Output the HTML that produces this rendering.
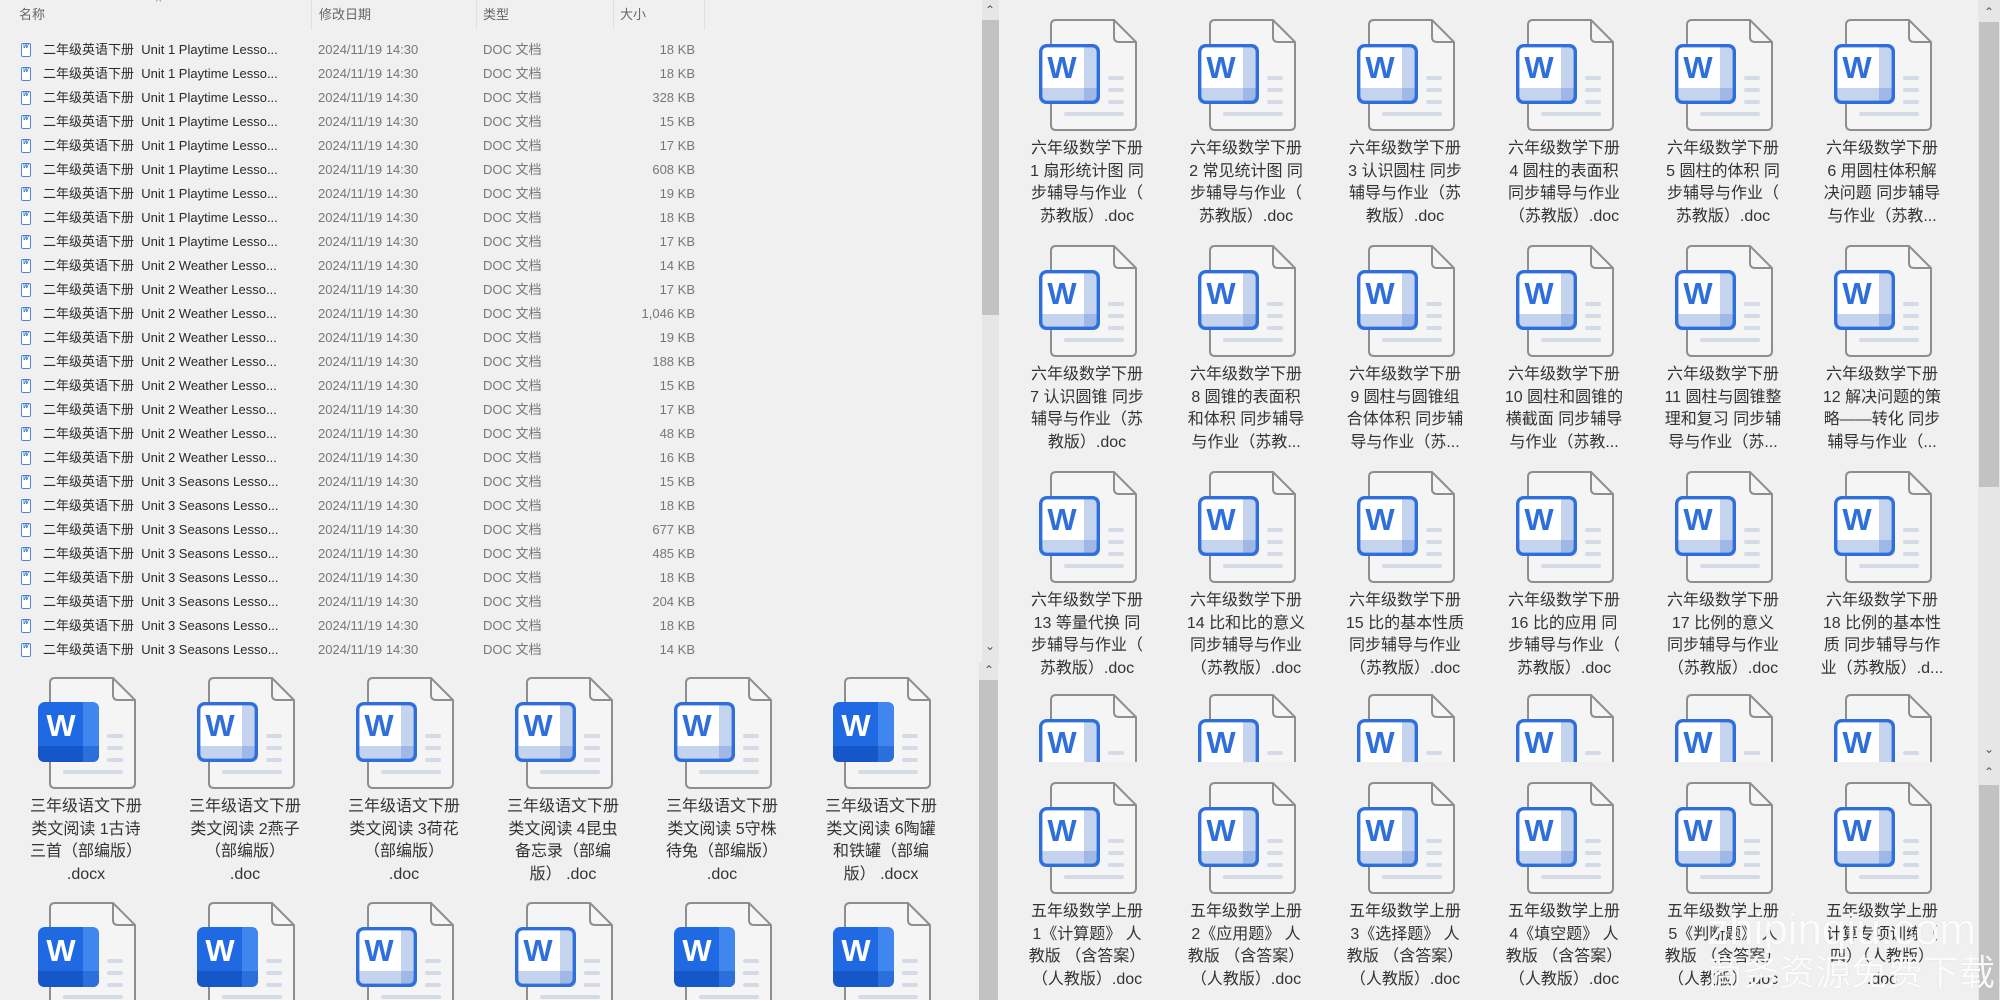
<!DOCTYPE html>
<html><head><meta charset="utf-8">
<style>
*{margin:0;padding:0;box-sizing:border-box}
html{width:2000px;height:1000px;overflow:hidden}
body{width:2000px;height:1000px;background:#f0f0f0;position:relative;overflow:hidden;font-family:"Liberation Sans","Noto Sans CJK SC",sans-serif;color:#333}
.abs{position:absolute}
.hdr{position:absolute;top:6px;font-size:13px;color:#666;line-height:18px}
.sep{position:absolute;top:0;width:1px;height:30px;background:#e0e0e0}
.row{position:absolute;left:0;width:720px;height:24px;line-height:24px;font-size:13px}
.row .ic{position:absolute;left:21px;top:5px;width:10px;height:14px;border:1.3px solid #5585d8;border-radius:2px;background:#fff}
.row .ic:after{content:"W";position:absolute;left:1px;top:-9px;font-size:6px;color:#2e6fdb;font-weight:bold}
.row .nm{position:absolute;left:43px;color:#2a2a2a;white-space:nowrap;font-size:13px}
.row .dt{position:absolute;left:318px;color:#777;font-size:13px}
.row .tp{position:absolute;left:483px;color:#777}
.row .sz{position:absolute;left:560px;width:135px;text-align:right;color:#777}
.it{position:absolute;width:160px;height:225px}
.it svg{position:absolute;left:30px;top:0;width:100px;height:112px}
.it .lb{position:absolute;left:-10px;top:119px;width:180px;text-align:center;font-size:16px;line-height:22.5px;color:#333;white-space:nowrap}
.sb{position:absolute;background:#e6e6e6}
.th{position:absolute;background:#c2c2c2}
.ar{position:absolute;font-size:12px;color:#555;text-align:center;width:18px;line-height:12px}
</style></head><body>
<svg width="0" height="0" style="position:absolute">
<defs>
<symbol id="pg" viewBox="0 0 100 112">
<path d="M19 1H77L99 23V106Q99 111 94 111H19Q14 111 14 106V6Q14 1 19 1Z" fill="#f5f5f5" stroke="#8e8e8e" stroke-width="2"/>
<path d="M77 1V18Q77 23 82 23H99" fill="none" stroke="#8e8e8e" stroke-width="2"/>
<rect x="71" y="57" width="16" height="4" rx="2" fill="#d4dbe7"/>
<rect x="71" y="69" width="16" height="4" rx="2" fill="#d4dbe7"/>
<rect x="71" y="81" width="16" height="4" rx="2" fill="#d4dbe7"/>
<rect x="27" y="93" width="60" height="4" rx="2" fill="#d4dbe7"/>
</symbol>
<symbol id="o" viewBox="0 0 100 112">
<use href="#pg"/>
<rect x="2" y="25" width="61" height="60" rx="7" fill="#fff"/>
<path d="M47 25H56Q63 25 63 32V78Q63 85 56 85H47Z" fill="#c5d4ee"/>
<path d="M2 69H63V78Q63 85 56 85H9Q2 85 2 78Z" fill="#c5d4ee"/>
<path d="M47 69H63V78Q63 85 56 85H47Z" fill="#9fb8e6"/>
<rect x="3.7" y="26.7" width="57.6" height="56.6" rx="6" fill="none" stroke="#2e6fdb" stroke-width="3.4"/>
</symbol>
<symbol id="f" viewBox="0 0 100 112">
<use href="#pg"/>
<rect x="2" y="25" width="61" height="60" rx="7" fill="#1f6ae2"/>
<path d="M47 25H56Q63 25 63 32V78Q63 85 56 85H47Z" fill="#3f87ee"/>
<path d="M2 69H63V78Q63 85 56 85H9Q2 85 2 78Z" fill="#1556c9"/>
<path d="M47 69H63V78Q63 85 56 85H47Z" fill="#2a6fdc"/>
</symbol>
</defs></svg>

<!-- LEFT LIST -->
<div class="abs" style="left:0;top:0;width:980px;height:662px;overflow:hidden">
<div class="hdr" style="left:19px">名称</div>
<div class="abs" style="left:156px;top:-4px;font-size:11px;color:#888">^</div>
<div class="hdr" style="left:319px">修改日期</div>
<div class="hdr" style="left:483px">类型</div>
<div class="hdr" style="left:620px">大小</div>
<div class="sep" style="left:311px"></div><div class="sep" style="left:476px"></div><div class="sep" style="left:613px"></div><div class="sep" style="left:704px"></div>

<div class="row" style="top:38px"><i class="ic"></i><span class="nm">二年级英语下册&nbsp; Unit 1 Playtime Lesso...</span><span class="dt">2024/11/19 14:30</span><span class="tp">DOC 文档</span><span class="sz">18 KB</span></div>
<div class="row" style="top:62px"><i class="ic"></i><span class="nm">二年级英语下册&nbsp; Unit 1 Playtime Lesso...</span><span class="dt">2024/11/19 14:30</span><span class="tp">DOC 文档</span><span class="sz">18 KB</span></div>
<div class="row" style="top:86px"><i class="ic"></i><span class="nm">二年级英语下册&nbsp; Unit 1 Playtime Lesso...</span><span class="dt">2024/11/19 14:30</span><span class="tp">DOC 文档</span><span class="sz">328 KB</span></div>
<div class="row" style="top:110px"><i class="ic"></i><span class="nm">二年级英语下册&nbsp; Unit 1 Playtime Lesso...</span><span class="dt">2024/11/19 14:30</span><span class="tp">DOC 文档</span><span class="sz">15 KB</span></div>
<div class="row" style="top:134px"><i class="ic"></i><span class="nm">二年级英语下册&nbsp; Unit 1 Playtime Lesso...</span><span class="dt">2024/11/19 14:30</span><span class="tp">DOC 文档</span><span class="sz">17 KB</span></div>
<div class="row" style="top:158px"><i class="ic"></i><span class="nm">二年级英语下册&nbsp; Unit 1 Playtime Lesso...</span><span class="dt">2024/11/19 14:30</span><span class="tp">DOC 文档</span><span class="sz">608 KB</span></div>
<div class="row" style="top:182px"><i class="ic"></i><span class="nm">二年级英语下册&nbsp; Unit 1 Playtime Lesso...</span><span class="dt">2024/11/19 14:30</span><span class="tp">DOC 文档</span><span class="sz">19 KB</span></div>
<div class="row" style="top:206px"><i class="ic"></i><span class="nm">二年级英语下册&nbsp; Unit 1 Playtime Lesso...</span><span class="dt">2024/11/19 14:30</span><span class="tp">DOC 文档</span><span class="sz">18 KB</span></div>
<div class="row" style="top:230px"><i class="ic"></i><span class="nm">二年级英语下册&nbsp; Unit 1 Playtime Lesso...</span><span class="dt">2024/11/19 14:30</span><span class="tp">DOC 文档</span><span class="sz">17 KB</span></div>
<div class="row" style="top:254px"><i class="ic"></i><span class="nm">二年级英语下册&nbsp; Unit 2 Weather Lesso...</span><span class="dt">2024/11/19 14:30</span><span class="tp">DOC 文档</span><span class="sz">14 KB</span></div>
<div class="row" style="top:278px"><i class="ic"></i><span class="nm">二年级英语下册&nbsp; Unit 2 Weather Lesso...</span><span class="dt">2024/11/19 14:30</span><span class="tp">DOC 文档</span><span class="sz">17 KB</span></div>
<div class="row" style="top:302px"><i class="ic"></i><span class="nm">二年级英语下册&nbsp; Unit 2 Weather Lesso...</span><span class="dt">2024/11/19 14:30</span><span class="tp">DOC 文档</span><span class="sz">1,046 KB</span></div>
<div class="row" style="top:326px"><i class="ic"></i><span class="nm">二年级英语下册&nbsp; Unit 2 Weather Lesso...</span><span class="dt">2024/11/19 14:30</span><span class="tp">DOC 文档</span><span class="sz">19 KB</span></div>
<div class="row" style="top:350px"><i class="ic"></i><span class="nm">二年级英语下册&nbsp; Unit 2 Weather Lesso...</span><span class="dt">2024/11/19 14:30</span><span class="tp">DOC 文档</span><span class="sz">188 KB</span></div>
<div class="row" style="top:374px"><i class="ic"></i><span class="nm">二年级英语下册&nbsp; Unit 2 Weather Lesso...</span><span class="dt">2024/11/19 14:30</span><span class="tp">DOC 文档</span><span class="sz">15 KB</span></div>
<div class="row" style="top:398px"><i class="ic"></i><span class="nm">二年级英语下册&nbsp; Unit 2 Weather Lesso...</span><span class="dt">2024/11/19 14:30</span><span class="tp">DOC 文档</span><span class="sz">17 KB</span></div>
<div class="row" style="top:422px"><i class="ic"></i><span class="nm">二年级英语下册&nbsp; Unit 2 Weather Lesso...</span><span class="dt">2024/11/19 14:30</span><span class="tp">DOC 文档</span><span class="sz">48 KB</span></div>
<div class="row" style="top:446px"><i class="ic"></i><span class="nm">二年级英语下册&nbsp; Unit 2 Weather Lesso...</span><span class="dt">2024/11/19 14:30</span><span class="tp">DOC 文档</span><span class="sz">16 KB</span></div>
<div class="row" style="top:470px"><i class="ic"></i><span class="nm">二年级英语下册&nbsp; Unit 3 Seasons Lesso...</span><span class="dt">2024/11/19 14:30</span><span class="tp">DOC 文档</span><span class="sz">15 KB</span></div>
<div class="row" style="top:494px"><i class="ic"></i><span class="nm">二年级英语下册&nbsp; Unit 3 Seasons Lesso...</span><span class="dt">2024/11/19 14:30</span><span class="tp">DOC 文档</span><span class="sz">18 KB</span></div>
<div class="row" style="top:518px"><i class="ic"></i><span class="nm">二年级英语下册&nbsp; Unit 3 Seasons Lesso...</span><span class="dt">2024/11/19 14:30</span><span class="tp">DOC 文档</span><span class="sz">677 KB</span></div>
<div class="row" style="top:542px"><i class="ic"></i><span class="nm">二年级英语下册&nbsp; Unit 3 Seasons Lesso...</span><span class="dt">2024/11/19 14:30</span><span class="tp">DOC 文档</span><span class="sz">485 KB</span></div>
<div class="row" style="top:566px"><i class="ic"></i><span class="nm">二年级英语下册&nbsp; Unit 3 Seasons Lesso...</span><span class="dt">2024/11/19 14:30</span><span class="tp">DOC 文档</span><span class="sz">18 KB</span></div>
<div class="row" style="top:590px"><i class="ic"></i><span class="nm">二年级英语下册&nbsp; Unit 3 Seasons Lesso...</span><span class="dt">2024/11/19 14:30</span><span class="tp">DOC 文档</span><span class="sz">204 KB</span></div>
<div class="row" style="top:614px"><i class="ic"></i><span class="nm">二年级英语下册&nbsp; Unit 3 Seasons Lesso...</span><span class="dt">2024/11/19 14:30</span><span class="tp">DOC 文档</span><span class="sz">18 KB</span></div>
<div class="row" style="top:638px"><i class="ic"></i><span class="nm">二年级英语下册&nbsp; Unit 3 Seasons Lesso...</span><span class="dt">2024/11/19 14:30</span><span class="tp">DOC 文档</span><span class="sz">14 KB</span></div>
</div>

<!-- LEFT GRID -->
<div class="abs" style="left:0;top:662px;width:980px;height:338px;overflow:hidden">
<div class="it" style="left:6px;top:15px"><svg viewBox="0 0 100 112"><use href="#f"/><text x="25" y="59" font-size="31" font-weight="bold" fill="#fff" text-anchor="middle" font-family="Liberation Sans">W</text></svg><div class="lb">三年级语文下册<br>类文阅读 1古诗<br>三首（部编版）<br>.docx</div></div>
<div class="it" style="left:165px;top:15px"><svg viewBox="0 0 100 112"><use href="#o"/><text x="25" y="59" font-size="31" font-weight="bold" fill="#2e6fdb" text-anchor="middle" font-family="Liberation Sans">W</text></svg><div class="lb">三年级语文下册<br>类文阅读 2燕子<br>（部编版）<br>.doc</div></div>
<div class="it" style="left:324px;top:15px"><svg viewBox="0 0 100 112"><use href="#o"/><text x="25" y="59" font-size="31" font-weight="bold" fill="#2e6fdb" text-anchor="middle" font-family="Liberation Sans">W</text></svg><div class="lb">三年级语文下册<br>类文阅读 3荷花<br>（部编版）<br>.doc</div></div>
<div class="it" style="left:483px;top:15px"><svg viewBox="0 0 100 112"><use href="#o"/><text x="25" y="59" font-size="31" font-weight="bold" fill="#2e6fdb" text-anchor="middle" font-family="Liberation Sans">W</text></svg><div class="lb">三年级语文下册<br>类文阅读 4昆虫<br>备忘录（部编<br>版） .doc</div></div>
<div class="it" style="left:642px;top:15px"><svg viewBox="0 0 100 112"><use href="#o"/><text x="25" y="59" font-size="31" font-weight="bold" fill="#2e6fdb" text-anchor="middle" font-family="Liberation Sans">W</text></svg><div class="lb">三年级语文下册<br>类文阅读 5守株<br>待兔（部编版）<br>.doc</div></div>
<div class="it" style="left:801px;top:15px"><svg viewBox="0 0 100 112"><use href="#f"/><text x="25" y="59" font-size="31" font-weight="bold" fill="#fff" text-anchor="middle" font-family="Liberation Sans">W</text></svg><div class="lb">三年级语文下册<br>类文阅读 6陶罐<br>和铁罐（部编<br>版） .docx</div></div>

<div class="it" style="left:6px;top:240px"><svg viewBox="0 0 100 112"><use href="#f"/><text x="25" y="59" font-size="31" font-weight="bold" fill="#fff" text-anchor="middle" font-family="Liberation Sans">W</text></svg></div>
<div class="it" style="left:165px;top:240px"><svg viewBox="0 0 100 112"><use href="#f"/><text x="25" y="59" font-size="31" font-weight="bold" fill="#fff" text-anchor="middle" font-family="Liberation Sans">W</text></svg></div>
<div class="it" style="left:324px;top:240px"><svg viewBox="0 0 100 112"><use href="#o"/><text x="25" y="59" font-size="31" font-weight="bold" fill="#2e6fdb" text-anchor="middle" font-family="Liberation Sans">W</text></svg></div>
<div class="it" style="left:483px;top:240px"><svg viewBox="0 0 100 112"><use href="#o"/><text x="25" y="59" font-size="31" font-weight="bold" fill="#2e6fdb" text-anchor="middle" font-family="Liberation Sans">W</text></svg></div>
<div class="it" style="left:642px;top:240px"><svg viewBox="0 0 100 112"><use href="#f"/><text x="25" y="59" font-size="31" font-weight="bold" fill="#fff" text-anchor="middle" font-family="Liberation Sans">W</text></svg></div>
<div class="it" style="left:801px;top:240px"><svg viewBox="0 0 100 112"><use href="#f"/><text x="25" y="59" font-size="31" font-weight="bold" fill="#fff" text-anchor="middle" font-family="Liberation Sans">W</text></svg></div>
</div>

<!-- LEFT SCROLLBARS -->
<div class="sb" style="left:982px;top:0;width:17px;height:662px"></div>
<div class="ar" style="left:981px;top:4px">&#8963;</div>
<div class="th" style="left:982px;top:20px;width:17px;height:295px"></div>
<div class="ar" style="left:981px;top:640px">&#8964;</div>
<div class="sb" style="left:979px;top:662px;width:19px;height:338px"></div>
<div class="ar" style="left:980px;top:664px">&#8963;</div>
<div class="th" style="left:979px;top:680px;width:19px;height:320px"></div>

<!-- RIGHT TOP -->
<div class="abs" style="left:0;top:0;width:1978px;height:762px;overflow:hidden">
<div class="it" style="left:1007px;top:19px"><svg viewBox="0 0 100 112"><use href="#o"/><text x="25" y="59" font-size="31" font-weight="bold" fill="#2e6fdb" text-anchor="middle" font-family="Liberation Sans">W</text></svg><div class="lb">六年级数学下册<br>1 扇形统计图 同<br>步辅导与作业（<br>苏教版）.doc</div></div>
<div class="it" style="left:1166px;top:19px"><svg viewBox="0 0 100 112"><use href="#o"/><text x="25" y="59" font-size="31" font-weight="bold" fill="#2e6fdb" text-anchor="middle" font-family="Liberation Sans">W</text></svg><div class="lb">六年级数学下册<br>2 常见统计图 同<br>步辅导与作业（<br>苏教版）.doc</div></div>
<div class="it" style="left:1325px;top:19px"><svg viewBox="0 0 100 112"><use href="#o"/><text x="25" y="59" font-size="31" font-weight="bold" fill="#2e6fdb" text-anchor="middle" font-family="Liberation Sans">W</text></svg><div class="lb">六年级数学下册<br>3 认识圆柱 同步<br>辅导与作业（苏<br>教版）.doc</div></div>
<div class="it" style="left:1484px;top:19px"><svg viewBox="0 0 100 112"><use href="#o"/><text x="25" y="59" font-size="31" font-weight="bold" fill="#2e6fdb" text-anchor="middle" font-family="Liberation Sans">W</text></svg><div class="lb">六年级数学下册<br>4 圆柱的表面积<br>同步辅导与作业<br>（苏教版）.doc</div></div>
<div class="it" style="left:1643px;top:19px"><svg viewBox="0 0 100 112"><use href="#o"/><text x="25" y="59" font-size="31" font-weight="bold" fill="#2e6fdb" text-anchor="middle" font-family="Liberation Sans">W</text></svg><div class="lb">六年级数学下册<br>5 圆柱的体积 同<br>步辅导与作业（<br>苏教版）.doc</div></div>
<div class="it" style="left:1802px;top:19px"><svg viewBox="0 0 100 112"><use href="#o"/><text x="25" y="59" font-size="31" font-weight="bold" fill="#2e6fdb" text-anchor="middle" font-family="Liberation Sans">W</text></svg><div class="lb">六年级数学下册<br>6 用圆柱体积解<br>决问题 同步辅导<br>与作业（苏教...</div></div>

<div class="it" style="left:1007px;top:245px"><svg viewBox="0 0 100 112"><use href="#o"/><text x="25" y="59" font-size="31" font-weight="bold" fill="#2e6fdb" text-anchor="middle" font-family="Liberation Sans">W</text></svg><div class="lb">六年级数学下册<br>7 认识圆锥 同步<br>辅导与作业（苏<br>教版）.doc</div></div>
<div class="it" style="left:1166px;top:245px"><svg viewBox="0 0 100 112"><use href="#o"/><text x="25" y="59" font-size="31" font-weight="bold" fill="#2e6fdb" text-anchor="middle" font-family="Liberation Sans">W</text></svg><div class="lb">六年级数学下册<br>8 圆锥的表面积<br>和体积 同步辅导<br>与作业（苏教...</div></div>
<div class="it" style="left:1325px;top:245px"><svg viewBox="0 0 100 112"><use href="#o"/><text x="25" y="59" font-size="31" font-weight="bold" fill="#2e6fdb" text-anchor="middle" font-family="Liberation Sans">W</text></svg><div class="lb">六年级数学下册<br>9 圆柱与圆锥组<br>合体体积 同步辅<br>导与作业（苏...</div></div>
<div class="it" style="left:1484px;top:245px"><svg viewBox="0 0 100 112"><use href="#o"/><text x="25" y="59" font-size="31" font-weight="bold" fill="#2e6fdb" text-anchor="middle" font-family="Liberation Sans">W</text></svg><div class="lb">六年级数学下册<br>10 圆柱和圆锥的<br>横截面 同步辅导<br>与作业（苏教...</div></div>
<div class="it" style="left:1643px;top:245px"><svg viewBox="0 0 100 112"><use href="#o"/><text x="25" y="59" font-size="31" font-weight="bold" fill="#2e6fdb" text-anchor="middle" font-family="Liberation Sans">W</text></svg><div class="lb">六年级数学下册<br>11 圆柱与圆锥整<br>理和复习 同步辅<br>导与作业（苏...</div></div>
<div class="it" style="left:1802px;top:245px"><svg viewBox="0 0 100 112"><use href="#o"/><text x="25" y="59" font-size="31" font-weight="bold" fill="#2e6fdb" text-anchor="middle" font-family="Liberation Sans">W</text></svg><div class="lb">六年级数学下册<br>12 解决问题的策<br>略——转化 同步<br>辅导与作业（...</div></div>

<div class="it" style="left:1007px;top:471px"><svg viewBox="0 0 100 112"><use href="#o"/><text x="25" y="59" font-size="31" font-weight="bold" fill="#2e6fdb" text-anchor="middle" font-family="Liberation Sans">W</text></svg><div class="lb">六年级数学下册<br>13 等量代换 同<br>步辅导与作业（<br>苏教版）.doc</div></div>
<div class="it" style="left:1166px;top:471px"><svg viewBox="0 0 100 112"><use href="#o"/><text x="25" y="59" font-size="31" font-weight="bold" fill="#2e6fdb" text-anchor="middle" font-family="Liberation Sans">W</text></svg><div class="lb">六年级数学下册<br>14 比和比的意义<br>同步辅导与作业<br>（苏教版）.doc</div></div>
<div class="it" style="left:1325px;top:471px"><svg viewBox="0 0 100 112"><use href="#o"/><text x="25" y="59" font-size="31" font-weight="bold" fill="#2e6fdb" text-anchor="middle" font-family="Liberation Sans">W</text></svg><div class="lb">六年级数学下册<br>15 比的基本性质<br>同步辅导与作业<br>（苏教版）.doc</div></div>
<div class="it" style="left:1484px;top:471px"><svg viewBox="0 0 100 112"><use href="#o"/><text x="25" y="59" font-size="31" font-weight="bold" fill="#2e6fdb" text-anchor="middle" font-family="Liberation Sans">W</text></svg><div class="lb">六年级数学下册<br>16 比的应用 同<br>步辅导与作业（<br>苏教版）.doc</div></div>
<div class="it" style="left:1643px;top:471px"><svg viewBox="0 0 100 112"><use href="#o"/><text x="25" y="59" font-size="31" font-weight="bold" fill="#2e6fdb" text-anchor="middle" font-family="Liberation Sans">W</text></svg><div class="lb">六年级数学下册<br>17 比例的意义<br>同步辅导与作业<br>（苏教版）.doc</div></div>
<div class="it" style="left:1802px;top:471px"><svg viewBox="0 0 100 112"><use href="#o"/><text x="25" y="59" font-size="31" font-weight="bold" fill="#2e6fdb" text-anchor="middle" font-family="Liberation Sans">W</text></svg><div class="lb">六年级数学下册<br>18 比例的基本性<br>质 同步辅导与作<br>业（苏教版）.d...</div></div>

<div class="it" style="left:1007px;top:694px"><svg viewBox="0 0 100 112"><use href="#o"/><text x="25" y="59" font-size="31" font-weight="bold" fill="#2e6fdb" text-anchor="middle" font-family="Liberation Sans">W</text></svg></div>
<div class="it" style="left:1166px;top:694px"><svg viewBox="0 0 100 112"><use href="#o"/><text x="25" y="59" font-size="31" font-weight="bold" fill="#2e6fdb" text-anchor="middle" font-family="Liberation Sans">W</text></svg></div>
<div class="it" style="left:1325px;top:694px"><svg viewBox="0 0 100 112"><use href="#o"/><text x="25" y="59" font-size="31" font-weight="bold" fill="#2e6fdb" text-anchor="middle" font-family="Liberation Sans">W</text></svg></div>
<div class="it" style="left:1484px;top:694px"><svg viewBox="0 0 100 112"><use href="#o"/><text x="25" y="59" font-size="31" font-weight="bold" fill="#2e6fdb" text-anchor="middle" font-family="Liberation Sans">W</text></svg></div>
<div class="it" style="left:1643px;top:694px"><svg viewBox="0 0 100 112"><use href="#o"/><text x="25" y="59" font-size="31" font-weight="bold" fill="#2e6fdb" text-anchor="middle" font-family="Liberation Sans">W</text></svg></div>
<div class="it" style="left:1802px;top:694px"><svg viewBox="0 0 100 112"><use href="#o"/><text x="25" y="59" font-size="31" font-weight="bold" fill="#2e6fdb" text-anchor="middle" font-family="Liberation Sans">W</text></svg></div>
</div>

<!-- RIGHT BOTTOM -->
<div class="abs" style="left:0;top:762px;width:1978px;height:238px;overflow:hidden">
<div class="it" style="left:1007px;top:20px"><svg viewBox="0 0 100 112"><use href="#o"/><text x="25" y="59" font-size="31" font-weight="bold" fill="#2e6fdb" text-anchor="middle" font-family="Liberation Sans">W</text></svg><div class="lb">五年级数学上册<br>1《计算题》 人<br>教版 （含答案）<br>（人教版）.doc</div></div>
<div class="it" style="left:1166px;top:20px"><svg viewBox="0 0 100 112"><use href="#o"/><text x="25" y="59" font-size="31" font-weight="bold" fill="#2e6fdb" text-anchor="middle" font-family="Liberation Sans">W</text></svg><div class="lb">五年级数学上册<br>2《应用题》 人<br>教版 （含答案）<br>（人教版）.doc</div></div>
<div class="it" style="left:1325px;top:20px"><svg viewBox="0 0 100 112"><use href="#o"/><text x="25" y="59" font-size="31" font-weight="bold" fill="#2e6fdb" text-anchor="middle" font-family="Liberation Sans">W</text></svg><div class="lb">五年级数学上册<br>3《选择题》 人<br>教版 （含答案）<br>（人教版）.doc</div></div>
<div class="it" style="left:1484px;top:20px"><svg viewBox="0 0 100 112"><use href="#o"/><text x="25" y="59" font-size="31" font-weight="bold" fill="#2e6fdb" text-anchor="middle" font-family="Liberation Sans">W</text></svg><div class="lb">五年级数学上册<br>4《填空题》 人<br>教版 （含答案）<br>（人教版）.doc</div></div>
<div class="it" style="left:1643px;top:20px"><svg viewBox="0 0 100 112"><use href="#o"/><text x="25" y="59" font-size="31" font-weight="bold" fill="#2e6fdb" text-anchor="middle" font-family="Liberation Sans">W</text></svg><div class="lb">五年级数学上册<br>5《判断题》 人<br>教版 （含答案）<br>（人教版）.doc</div></div>
<div class="it" style="left:1802px;top:20px"><svg viewBox="0 0 100 112"><use href="#o"/><text x="25" y="59" font-size="31" font-weight="bold" fill="#2e6fdb" text-anchor="middle" font-family="Liberation Sans">W</text></svg><div class="lb">五年级数学上册<br>计算专项训练（<br>四）（人教版）<br>.doc</div></div>
</div>

<!-- RIGHT SCROLLBARS -->
<div class="sb" style="left:1978px;top:0;width:22px;height:762px"></div>
<div class="ar" style="left:1980px;top:6px">&#8963;</div>
<div class="th" style="left:1979px;top:22px;width:20px;height:465px"></div>
<div class="ar" style="left:1980px;top:743px">&#8964;</div>
<div class="sb" style="left:1978px;top:762px;width:22px;height:238px"></div>
<div class="ar" style="left:1980px;top:766px">&#8963;</div>
<div class="th" style="left:1979px;top:785px;width:20px;height:215px"></div>

<!-- WATERMARK -->
<div class="abs" style="left:1707px;top:905px;font-size:44px;color:rgba(255,255,255,0.92);text-shadow:0 0 1px rgba(0,0,0,0.15);white-space:nowrap;line-height:50px">zhipinqiu.com</div>
<div class="abs" style="left:1707px;top:946px;font-size:36px;color:rgba(255,255,255,0.92);text-shadow:0 0 1px rgba(0,0,0,0.15);white-space:nowrap;line-height:48px;font-family:'Noto Sans CJK SC',sans-serif">商务资源免费下载</div>
</body></html>
